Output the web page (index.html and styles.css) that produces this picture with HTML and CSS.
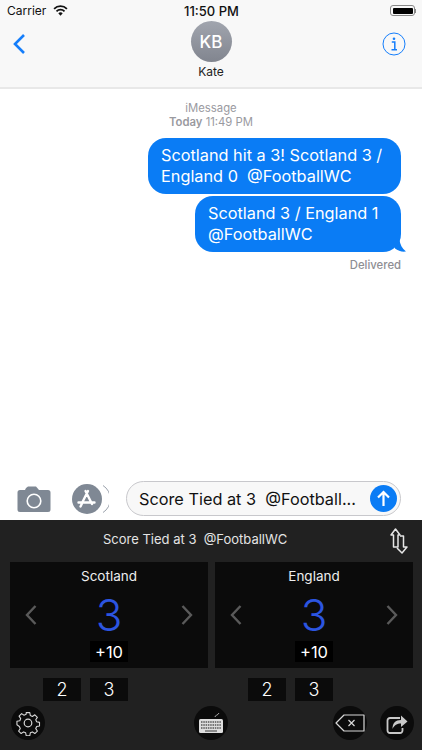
FILE: index.html
```html
<!DOCTYPE html>
<html lang="en">
<head>
    <meta charset="UTF-8">
    <meta name="viewport" content="width=device-width, initial-scale=1.0">
    <title>Messages - Kate</title>
    <link rel="stylesheet" href="styles.css">
</head>
<body>

    <div class="top-bar">
        <div class="status-bar">
            <div class="status-left">
                <span>Carrier</span>
                <svg class="wifi" width="15" height="11" viewBox="0 0 16 12"><path d="M8 11.600 5.600 9a3.400 3.400 0 0 1 4.800 0z" fill="#111"/><path d="M3.600 6.900a6.200 6.200 0 0 1 8.800 0M1 4.200a9.900 9.900 0 0 1 14 0" fill="none" stroke="#111" stroke-width="1.900"/></svg>
            </div>
            <div class="status-time">11:50 PM</div>
            <div class="status-right">
                <div class="battery"><div class="battery-fill"></div></div>
                <div class="battery-tip"></div>
            </div>
        </div>
        <div class="nav-bar">
            <svg class="back" width="14" height="22" viewBox="0 0 14 22"><path d="M12 2 3 11l9 9" fill="none" stroke="#157efb" stroke-width="2.600"/></svg>
            <div class="contact">
                <div class="avatar">KB</div>
                <div class="contact-name">Kate</div>
            </div>
            <svg class="info" width="24" height="24" viewBox="0 0 24 24"><circle cx="12" cy="12" r="11" fill="none" stroke="#157efb" stroke-width="1"/><circle cx="12" cy="6.800" r="1.300" fill="#157efb"/><path d="M9.800 10h3v7.500M9.500 17.800h5.500" fill="none" stroke="#157efb" stroke-width="1.500"/></svg>
        </div>
    </div>

    <div class="thread">
        <div class="thread-head"><div>iMessage</div><div><b>Today</b> 11:49 PM</div></div>
        <div class="bubble bubble-wide">Scotland hit a 3! Scotland 3 / England 0&nbsp; @FootballWC</div>
        <div class="bubble bubble-narrow">Scotland 3 / England 1 @FootballWC
            <svg class="bubble-tail" width="14" height="12" viewBox="0 0 14 12"><path d="M0 0h6.500c.5 4 2.500 8.500 6.500 11.500-4 .5-8-.5-11-3z" fill="#0a7cf5"/></svg>
        </div>
        <div class="delivered">Delivered</div>
    </div>

    <div class="input-bar">
        <svg class="camera" width="34" height="26" viewBox="0 0 34 26"><path d="M3 4h5l1-2 2-1.500h8L22 4h9a2.500 2.500 0 0 1 2.500 2.500v17A2.500 2.500 0 0 1 31 26H3a2.500 2.500 0 0 1-2.500-2.500v-17A2.500 2.500 0 0 1 3 4z" fill="#7f8894"/><circle cx="17" cy="15" r="6.800" fill="none" stroke="#fff" stroke-width="1.600"/></svg>
        <svg class="store" width="37" height="30" viewBox="0 0 37 30"><path d="M31 1.500a16 16 0 0 1 0 27" fill="none" stroke="#9aa1ab" stroke-width="1"/><circle cx="15" cy="15" r="15" fill="#7f8894"/><path d="M16 7 10 19M13.500 7l6.500 13M6.500 18.500h16M8.500 22.500l1.500-3" fill="none" stroke="#fff" stroke-width="2.400" stroke-linecap="round"/></svg>
        <div class="input-box">
            <span class="input-text">Score Tied at 3&nbsp; @Football...</span>
            <svg class="send" width="27" height="27" viewBox="0 0 27 27"><circle cx="13.500" cy="13.500" r="13.500" fill="#0a7cf5"/><path d="M13.500 21V7M8 12.500l5.500-5.500 5.500 5.500" fill="none" stroke="#fff" stroke-width="2.200"/></svg>
        </div>
    </div>

    <div class="keyboard">
        <div class="kb-head">
            <span class="kb-title">Score Tied at 3&nbsp; @FootballWC</span>
            <svg class="swap" width="18" height="26" viewBox="0 0 18 26" fill="none" stroke="#e6e6e6" stroke-width="1.500" stroke-linejoin="round"><path d="M1 7 5.500 1 10 7H8v12H3.500V7z"/><path d="M10 8h3.500v11H17l-5 6-5-5"/></svg>
        </div>

        <div class="panels">
            <div class="team">
                <div class="panel">
                    <div class="team-name">Scotland</div>
                    <div class="score-row">
                        <svg width="12" height="20" viewBox="0 0 12 20"><path d="M10.500 1 2 10l8.500 9" fill="none" stroke="#5a5a5a" stroke-width="2.400"/></svg>
                        <div class="score">3</div>
                        <svg width="12" height="20" viewBox="0 0 12 20"><path d="M1.500 1 10 10l-8.500 9" fill="none" stroke="#5a5a5a" stroke-width="2.400"/></svg>
                    </div>
                    <div class="bonus">+10</div>
                </div>
                <div class="quick-row">
                    <div class="quick">2</div>
                    <div class="quick">3</div>
                </div>
            </div>
            <div class="team">
                <div class="panel">
                    <div class="team-name">England</div>
                    <div class="score-row">
                        <svg width="12" height="20" viewBox="0 0 12 20"><path d="M10.500 1 2 10l8.500 9" fill="none" stroke="#5a5a5a" stroke-width="2.400"/></svg>
                        <div class="score">3</div>
                        <svg width="12" height="20" viewBox="0 0 12 20"><path d="M1.500 1 10 10l-8.500 9" fill="none" stroke="#5a5a5a" stroke-width="2.400"/></svg>
                    </div>
                    <div class="bonus">+10</div>
                </div>
                <div class="quick-row">
                    <div class="quick">2</div>
                    <div class="quick">3</div>
                </div>
            </div>
        </div>

        <div class="tools">
            <div class="tool">
                <svg width="26" height="26" viewBox="0 0 26 26" fill="none" stroke="#d8d8d8" stroke-width="1.200" stroke-linejoin="round"><path d="M11 1.500h4l.6 3.200 2.300 1 2.700-1.800 2.800 2.800-1.800 2.700 1 2.300 3.200.6v4l-3.200.6-1 2.300 1.800 2.700-2.800 2.800-2.700-1.800-2.300 1-.6 3.200h-4l-.6-3.200-2.300-1-2.700 1.800-2.800-2.800 1.800-2.700-1-2.300L.7 15v-4l3.200-.6 1-2.300-1.800-2.700 2.800-2.800 2.700 1.800 2.300-1z" transform="translate(1.300 1.300) scale(.9)"/><circle cx="13" cy="13" r="3.800"/></svg>
            </div>
            <div class="tool tool-center">
                <svg width="26" height="22" viewBox="0 0 26 22"><path d="M17 5c0-2 3-1.500 4-4" fill="none" stroke="#aaa" stroke-width="1"/><rect x="1" y="7" width="24" height="14" rx="1.500" fill="#ddd"/><path d="M3 10h20M3 13h20M3 16h20" stroke="#555" stroke-width="1.400" stroke-dasharray="1.500 .8"/><path d="M7 19h12" stroke="#555" stroke-width="1.200"/></svg>
            </div>
            <div class="tools-right">
                <div class="tool">
                    <svg width="30" height="18" viewBox="0 0 30 18" fill="none" stroke="#d8d8d8" stroke-width="1.200"><path d="M9 1h20v16H9L1 9z" stroke-linejoin="round"/><path d="M13.500 6l6 6M19.500 6l-6 6"/></svg>
                </div>
                <div class="tool">
                    <svg width="22" height="22" viewBox="0 0 22 22"><path d="M14 6H4a2.500 2.500 0 0 0-2.500 2.500v10A2.500 2.500 0 0 0 4 21h10a2.500 2.500 0 0 0 2.500-2.500V16" fill="none" stroke="#c8c8c8" stroke-width="1.800"/><path d="M6.500 17c0-6 3-9 8.500-9V3.500L21.500 9.500 15 15v-3.500c-4 0-6.500 1.500-8.500 5.500z" fill="#c8c8c8"/></svg>
                </div>
            </div>
        </div>
    </div>

</body>
</html>
```

FILE: styles.css
```css
* { box-sizing: border-box; margin: 0; padding: 0; font-family: Inter, "Liberation Sans", sans-serif; }
body {
    width: 422px;
    height: 750px;
    background: white;
    display: flex;
    flex-direction: column;
    overflow: hidden;
}
svg { display: block; flex-shrink: 0; }

.top-bar {
    height: 89px;
    background: #f8f8f8;
    border-bottom: 2px solid #e8e8e8;
}
.status-bar {
    height: 21px;
    display: grid;
    grid-template-columns: 1fr auto 1fr;
    align-items: center;
    padding: 0 6px 0 7px;
    font-size: 12px;
    color: #111;
}
.status-left {
    display: flex;
    align-items: center;
    gap: 7px;
}
.status-time {
    font-size: 13px;
    font-weight: 500;
}
.status-right {
    display: flex;
    align-items: center;
    justify-content: flex-end;
}
.battery {
    width: 25px;
    height: 11px;
    padding: 1.500px;
    border: 1px solid #888;
    border-radius: 3px;
}
.battery-fill {
    height: 100%;
    background: #000;
    border-radius: 1px;
}
.battery-tip {
    width: 1px;
    height: 4px;
    background: #888;
}
.nav-bar {
    height: 66px;
    display: grid;
    grid-template-columns: 1fr 41px 1fr;
    align-items: start;
}
.back { margin: 12px 0 0 12px; }
.info { margin: 11px 16px 0 0; justify-self: end; }
.contact {
    display: flex;
    flex-direction: column;
    align-items: center;
}
.avatar {
    width: 41px;
    height: 41px;
    border-radius: 50%;
    background: linear-gradient(#a1a5ae, #81858f);
    color: white;
    font-size: 17px;
    font-weight: 500;
    display: flex;
    align-items: center;
    justify-content: center;
    flex-shrink: 0;
}
.contact-name {
    font-size: 12px;
    margin-top: 2px;
    color: #222;
}

.thread {
    flex: 1;
    display: flex;
    flex-direction: column;
    align-items: flex-end;
    padding: 12px 21px 0 0;
}
.thread-head {
    width: 100%;
    padding-left: 21px;
    text-align: center;
    font-size: 11.300px;
    line-height: 14px;
    color: #9a9a9f;
    margin-bottom: 9px;
}
.thread-head b { font-weight: 600; }
.bubble {
    position: relative;
    background: #0a7cf5;
    color: white;
    font-size: 16.300px;
    line-height: 21px;
    padding: 7px 13px;
    border-radius: 18px;
    height: 56px;
}
.bubble-wide { width: 253px; margin-bottom: 2px; }
.bubble-narrow { width: 206px; }
.bubble-tail {
    position: absolute;
    right: -6px;
    bottom: 0;
}
.delivered {
    font-size: 11.300px;
    font-weight: 500;
    color: #8e8e93;
    margin-top: 6px;
}

.input-bar {
    height: 50px;
    display: flex;
    align-items: center;
    padding: 7px 21px 0 17px;
}
.camera { margin-right: 21px; }
.store { margin-right: 17px; }
.input-box {
    flex: 1;
    height: 35px;
    display: flex;
    align-items: center;
    justify-content: space-between;
    padding: 0 3px 0 12px;
    background: #f8f8f8;
    border: 1px solid #c8c8cc;
    border-radius: 18px;
    font-size: 16.300px;
    color: #111;
}

.keyboard {
    height: 230px;
    background: #212121;
    color: white;
    display: flex;
    flex-direction: column;
}
.kb-head {
    height: 42px;
    position: relative;
    display: flex;
    align-items: center;
    padding: 0 0 4px 103px;
}
.kb-title {
    font-size: 13px;
    color: #e4e4e4;
}
.swap {
    position: absolute;
    right: 14px;
    top: 8px;
}
.panels {
    display: flex;
    gap: 7px;
    padding-left: 10px;
}
.team { width: 198px; }
.panel {
    height: 106px;
    background: #0b0b0b;
    display: flex;
    flex-direction: column;
    align-items: center;
    padding-top: 6px;
}
.team-name {
    font-size: 13.500px;
    line-height: 17px;
    color: #eee;
}
.score-row {
    width: 100%;
    display: flex;
    align-items: center;
    justify-content: space-between;
    padding: 4px 15px 0;
    height: 56px;
}
.score {
    font-size: 44px;
    font-weight: 300;
    color: #2c55e0;
}
.bonus {
    width: 38px;
    height: 21px;
    background: #000;
    font-size: 16.500px;
    display: flex;
    align-items: center;
    justify-content: center;
}
.quick-row {
    display: flex;
    gap: 9px;
    margin-top: 10px;
    padding-left: 33px;
}
.quick {
    width: 38px;
    height: 23px;
    background: #0b0b0b;
    font-size: 18px;
    font-weight: 300;
    display: flex;
    align-items: center;
    justify-content: center;
}
.tools {
    display: grid;
    grid-template-columns: 1fr 34px 1fr;
    align-items: center;
    padding: 5px 8px 0 11px;
}
.tool {
    width: 34px;
    height: 34px;
    border-radius: 50%;
    background: #0b0b0b;
    display: flex;
    align-items: center;
    justify-content: center;
}
.tool-center { margin-left: -1.500px; }
.tools-right {
    display: flex;
    justify-content: flex-end;
    gap: 13px;
}
```
